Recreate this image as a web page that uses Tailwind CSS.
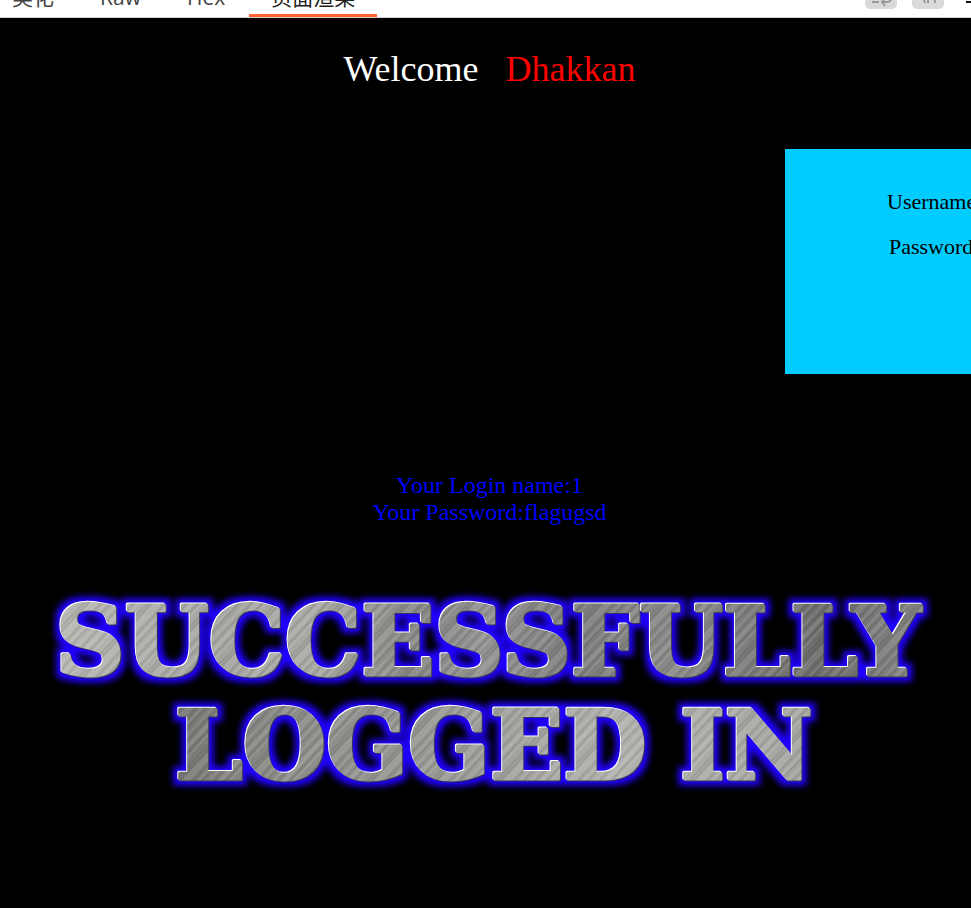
<!DOCTYPE html>
<html lang="zh-CN">
<head>
<meta charset="utf-8">
<meta name="viewport" content="width=device-width, initial-scale=1">
<title>Welcome Dhakkan</title>
<script src="https://cdn.jsdelivr.net/npm/@tailwindcss/browser@4"></script>
</head>
<body class="min-h-screen overflow-x-hidden bg-black font-['Liberation_Serif','Noto_Sans_CJK_SC',serif]">
<header class="flex h-[18px] items-end justify-between overflow-hidden border-b border-[#d0d0d0] bg-white font-['Open_Sans','Noto_Sans_CJK_SC',sans-serif] text-[21px] leading-[30px] text-[#444]">
  <nav class="-ml-[10px] flex items-end gap-[2px]">
    <button class="border-b-3 border-transparent px-[22px] pb-[2px]">美化</button>
    <button class="border-b-3 border-transparent px-[22px] pb-[2px]">Raw</button>
    <button class="border-b-3 border-transparent px-[22px] pb-[2px]">Hex</button>
    <button class="border-b-3 border-[#ff6633] px-[22px] pb-[2px] text-[#222]">页面渲染</button>
  </nav>
  <div class="flex items-end gap-[15px] pb-[8px]">
    <button aria-label="Wrap lines" class="h-8 w-8 rounded-[5px] bg-[#d9d9d9]">
      <svg viewBox="0 0 32 32" class="size-8" fill="none" stroke="#999" stroke-width="2"><path d="M7 17h17M7 25h7M17 25h5q4 0 4-4t-4-4M20 21l-3 4 3 4"/></svg>
    </button>
    <button aria-label="Show line breaks" class="h-8 w-8 rounded-[5px] bg-[#d9d9d9]">
      <svg viewBox="0 0 32 32" class="size-8" fill="none" stroke="#999" stroke-width="2"><path d="M9 15l4 11M16 15v11M17 18q6-2 6 8"/></svg>
    </button>
    <button aria-label="Menu" class="-mr-[13px] ml-[7px] h-8 w-[18px]">
      <svg viewBox="0 0 18 32" class="h-8 w-[18px]" stroke="#111" stroke-width="2"><path d="M0 11h18M0 18h18M0 25h18"/></svg>
    </button>
  </div>
</header>
<main class="overflow-x-hidden pl-[8px]">
  <h1 class="flex justify-center gap-[27px] pt-[30px] text-[36px] leading-[42px] text-white"><span>Welcome</span><span class="text-[#ff0000]">Dhakkan</span></h1>
  <form class="mt-[59px] ml-[777px] flex h-[225px] w-[640px] flex-col gap-[20px] bg-[#00ccff] pt-[40px] pl-[102px] text-[22px] leading-[25px] text-black">
    <div class="flex gap-2"><label for="uname">Username</label><input id="uname" type="text" class="w-[200px] bg-white"></div>
    <div class="flex gap-2 pl-[2px]"><label for="passwd">Password</label><input id="passwd" type="password" class="w-[200px] bg-white"></div>
  </form>
  <p class="mt-[98px] text-center text-[24px] leading-[27px] text-[#0000ff]">Your Login name:1<br>Your Password:flagugsd</p>
  <h2 class="mt-[54px]">
    <svg viewBox="0 0 963 230" class="block w-full" font-family="DejaVu Serif" font-weight="bold" font-size="96" text-anchor="middle" stroke-width="3" stroke-linejoin="round">
      <defs>
        <linearGradient id="steel1" gradientUnits="userSpaceOnUse" x1="45" y1="0" x2="915" y2="90">
          <stop offset="0" stop-color="#b8b8b4"/><stop offset=".2" stop-color="#a4a4a0"/><stop offset=".3" stop-color="#a8a8a4"/><stop offset=".42" stop-color="#868684"/><stop offset=".5" stop-color="#929290"/><stop offset=".6" stop-color="#7c7c7a"/><stop offset=".72" stop-color="#8a8a88"/><stop offset=".88" stop-color="#6c6c6a"/><stop offset="1" stop-color="#868684"/>
        </linearGradient>
        <linearGradient id="steel2" gradientUnits="userSpaceOnUse" x1="165" y1="110" x2="800" y2="200">
          <stop offset="0" stop-color="#757573"/><stop offset=".18" stop-color="#8a8a87"/><stop offset=".45" stop-color="#9a9a97"/><stop offset=".7" stop-color="#b0b0ac"/><stop offset="1" stop-color="#a4a4a0"/>
        </linearGradient>
        <pattern id="brush" width="47" height="60" patternUnits="userSpaceOnUse" patternTransform="rotate(43)">
          <path d="M2 0v60M11 0v60M17 0v60M30 0v60M41 0v60" stroke="#fff" stroke-opacity=".22" stroke-width="1"/>
          <path d="M6 0v60M14 0v60M24 0v60M27 0v60M37 0v60M44 0v60" stroke="#000" stroke-opacity=".16" stroke-width="1"/>
          <path d="M9 0v60M33 0v60" stroke="#fff" stroke-opacity=".1" stroke-width="3"/>
        </pattern>
        <pattern id="metal1" width="963" height="230" patternUnits="userSpaceOnUse">
          <rect width="963" height="230" fill="url(#steel1)"/><rect width="963" height="230" fill="url(#brush)"/>
        </pattern>
        <pattern id="metal2" width="963" height="230" patternUnits="userSpaceOnUse">
          <rect width="963" height="230" fill="url(#steel2)"/><rect width="963" height="230" fill="url(#brush)"/>
        </pattern>
        <filter id="bevel" filterUnits="userSpaceOnUse" x="0" y="-20" width="963" height="250" color-interpolation-filters="sRGB">
          <feMorphology in="SourceAlpha" operator="dilate" radius="5" result="wide"/>
          <feGaussianBlur in="wide" stdDeviation="3" result="soft"/>
          <feFlood flood-color="#2000ff"/>
          <feComposite in2="soft" operator="in" result="glow"/>
          <feOffset in="SourceAlpha" dx="-1" dy="-1" result="up"/>
          <feFlood flood-color="#ffffff"/>
          <feComposite in2="up" operator="in" result="light"/>
          <feOffset in="SourceAlpha" dx="1" dy="1" result="down"/>
          <feFlood flood-color="#34345c"/>
          <feComposite in2="down" operator="in" result="shade"/>
          <feMerge><feMergeNode in="glow"/><feMergeNode in="shade"/><feMergeNode in="light"/><feMergeNode in="SourceGraphic"/></feMerge>
        </filter>
      </defs>
      <g filter="url(#bevel)">
        <text x="480" y="95" fill="url(#metal1)" stroke="url(#metal1)">SUCCESSFULLY</text>
        <text x="486" y="199" fill="url(#metal2)" stroke="url(#metal2)">LOGGED IN</text>
      </g>
    </svg>
  </h2>
</main>
</body>
</html>
